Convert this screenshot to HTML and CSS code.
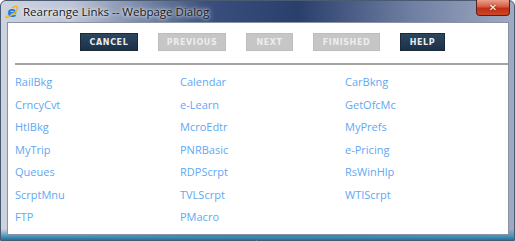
FILE: index.html
```html
<!DOCTYPE html>
<html>
<head>
<meta charset="utf-8">
<link rel="stylesheet" href="styles.css">
</head>
<body>
<div class="window">
  <div class="titlebar">
    <svg class="ie-icon" width="14" height="14" viewBox="0 0 14 14">
      <text x="7" y="12" text-anchor="middle" class="ie-e">e</text>
      <path d="M2 10.5 C -1 14 3 13 8 9 C 12 6 14 2 11 1.5 C 9.5 1.3 8 2.2 7 3" fill="none" stroke="#f2b51f" stroke-width="1.4"/>
    </svg>
    <span class="title">Rearrange Links -- Webpage Dialog</span>
    <div class="close"><span>✕</span></div>
  </div>
  <div class="content">
    <div class="toolbar">
      <button class="btn btn-cancel">CANCEL</button>
      <button class="btn btn-off btn-prev">PREVIOUS</button>
      <button class="btn btn-off btn-next">NEXT</button>
      <button class="btn btn-off btn-fin">FINISHED</button>
      <button class="btn btn-help">HELP</button>
    </div>
    <div class="rule"></div>
    <div class="links">
      <a>RailBkg</a><a>Calendar</a><a>CarBkng</a>
      <a>CrncyCvt</a><a>e-Learn</a><a>GetOfcMc</a>
      <a>HtlBkg</a><a>McroEdtr</a><a>MyPrefs</a>
      <a>MyTrip</a><a>PNRBasic</a><a>e-Pricing</a>
      <a>Queues</a><a>RDPScrpt</a><a>RsWinHlp</a>
      <a>ScrptMnu</a><a>TVLScrpt</a><a>WTIScrpt</a>
      <a>FTP</a><a>PMacro</a>
    </div>
  </div>
</div>
</body>
</html>
```
FILE: styles.css
```css
html, body {
  margin: 0;
  padding: 0;
  width: 515px;
  height: 241px;
  overflow: hidden;
}
.window {
  width: 515px;
  height: 241px;
  box-sizing: border-box;
  display: flex;
  flex-direction: column;
  background:
    linear-gradient(to bottom, rgba(0,0,0,0) 0, rgba(0,0,0,0) 228px, #3d8fb8 236px, #2a6e9a 239px, #5d8fb0 241px),
    linear-gradient(to right, #cdd3df 0, #bcc4d6 14%, #3a4f7e 40%, #2b3f6c 58%, #6f7fa3 80%, #a0aac0 100%);
  border: 1px solid #4a5a70;
  border-radius: 6px 6px 0 0;
  position: relative;
}
.titlebar {
  height: 21px;
  display: flex;
  align-items: center;
  padding-left: 4px;
  flex: none;
}
.ie-icon {
  margin-right: 4px;
  margin-top: 1px;
}
.ie-e {
  font-family: "DejaVu Sans", sans-serif;
  font-weight: bold;
  font-size: 14px;
  fill: #1c7fd8;
}
.title {
  font-family: "Open Sans", sans-serif;
  font-size: 11.5px;
  color: #1a1a1a;
  text-shadow: 0 0 6px rgba(255,255,255,0.9), 0 0 3px rgba(255,255,255,0.9);
}
.close {
  position: absolute;
  top: -1px;
  right: 4px;
  width: 34px;
  height: 16px;
  border: 1px solid #5a2018;
  border-top: none;
  border-radius: 0 0 4px 4px;
  background: linear-gradient(to bottom, #eaa08c 0, #d85a40 45%, #c22e18 55%, #cc4628 100%);
  display: flex;
  align-items: center;
  justify-content: center;
  box-sizing: border-box;
}
.close span {
  color: #fff;
  font-family: "DejaVu Sans", sans-serif;
  font-weight: bold;
  font-size: 10px;
  text-shadow: 0 0 2px #5a1a10;
}
.content {
  margin: 0 5px 5px 6px;
  height: 213px;
  background: #fff;
  border: 1px solid #8a93a4;
  box-sizing: border-box;
  flex: none;
}
.toolbar {
  display: flex;
  gap: 19px;
  padding: 10px 0 0 72px;
}
.btn {
  height: 18px;
  border: none;
  padding: 0;
  font-family: "DejaVu Sans", sans-serif;
  font-weight: bold;
  font-size: 8px;
  letter-spacing: 0.6px;
  color: #e8ecf0;
  background: linear-gradient(to bottom, #2c4660, #1c3146);
  border: 1px solid #1a2a3a;
  box-sizing: border-box;
}
.btn-off {
  background: #c6c6c6;
  border-color: #bdbdbd;
  color: #ededed;
}
.btn-cancel { width: 58px; }
.btn-prev { width: 68px; margin-left: 1px; }
.btn-next { width: 47px; margin-left: 1px; }
.btn-fin { width: 67px; margin-left: 1px; }
.btn-help { width: 45px; margin-left: 1px; }
.rule {
  height: 2px;
  background: #a4a4a4;
  margin: 12px 0 0 7px;
}
.links {
  display: grid;
  grid-template-columns: 165px 165px 165px;
  grid-auto-rows: 22.5px;
  padding: 6px 0 0 7px;
}
.links a {
  font-family: "Open Sans", sans-serif;
  font-size: 11px;
  line-height: 22.5px;
  color: #5fa8f4;
  cursor: pointer;
}
```
